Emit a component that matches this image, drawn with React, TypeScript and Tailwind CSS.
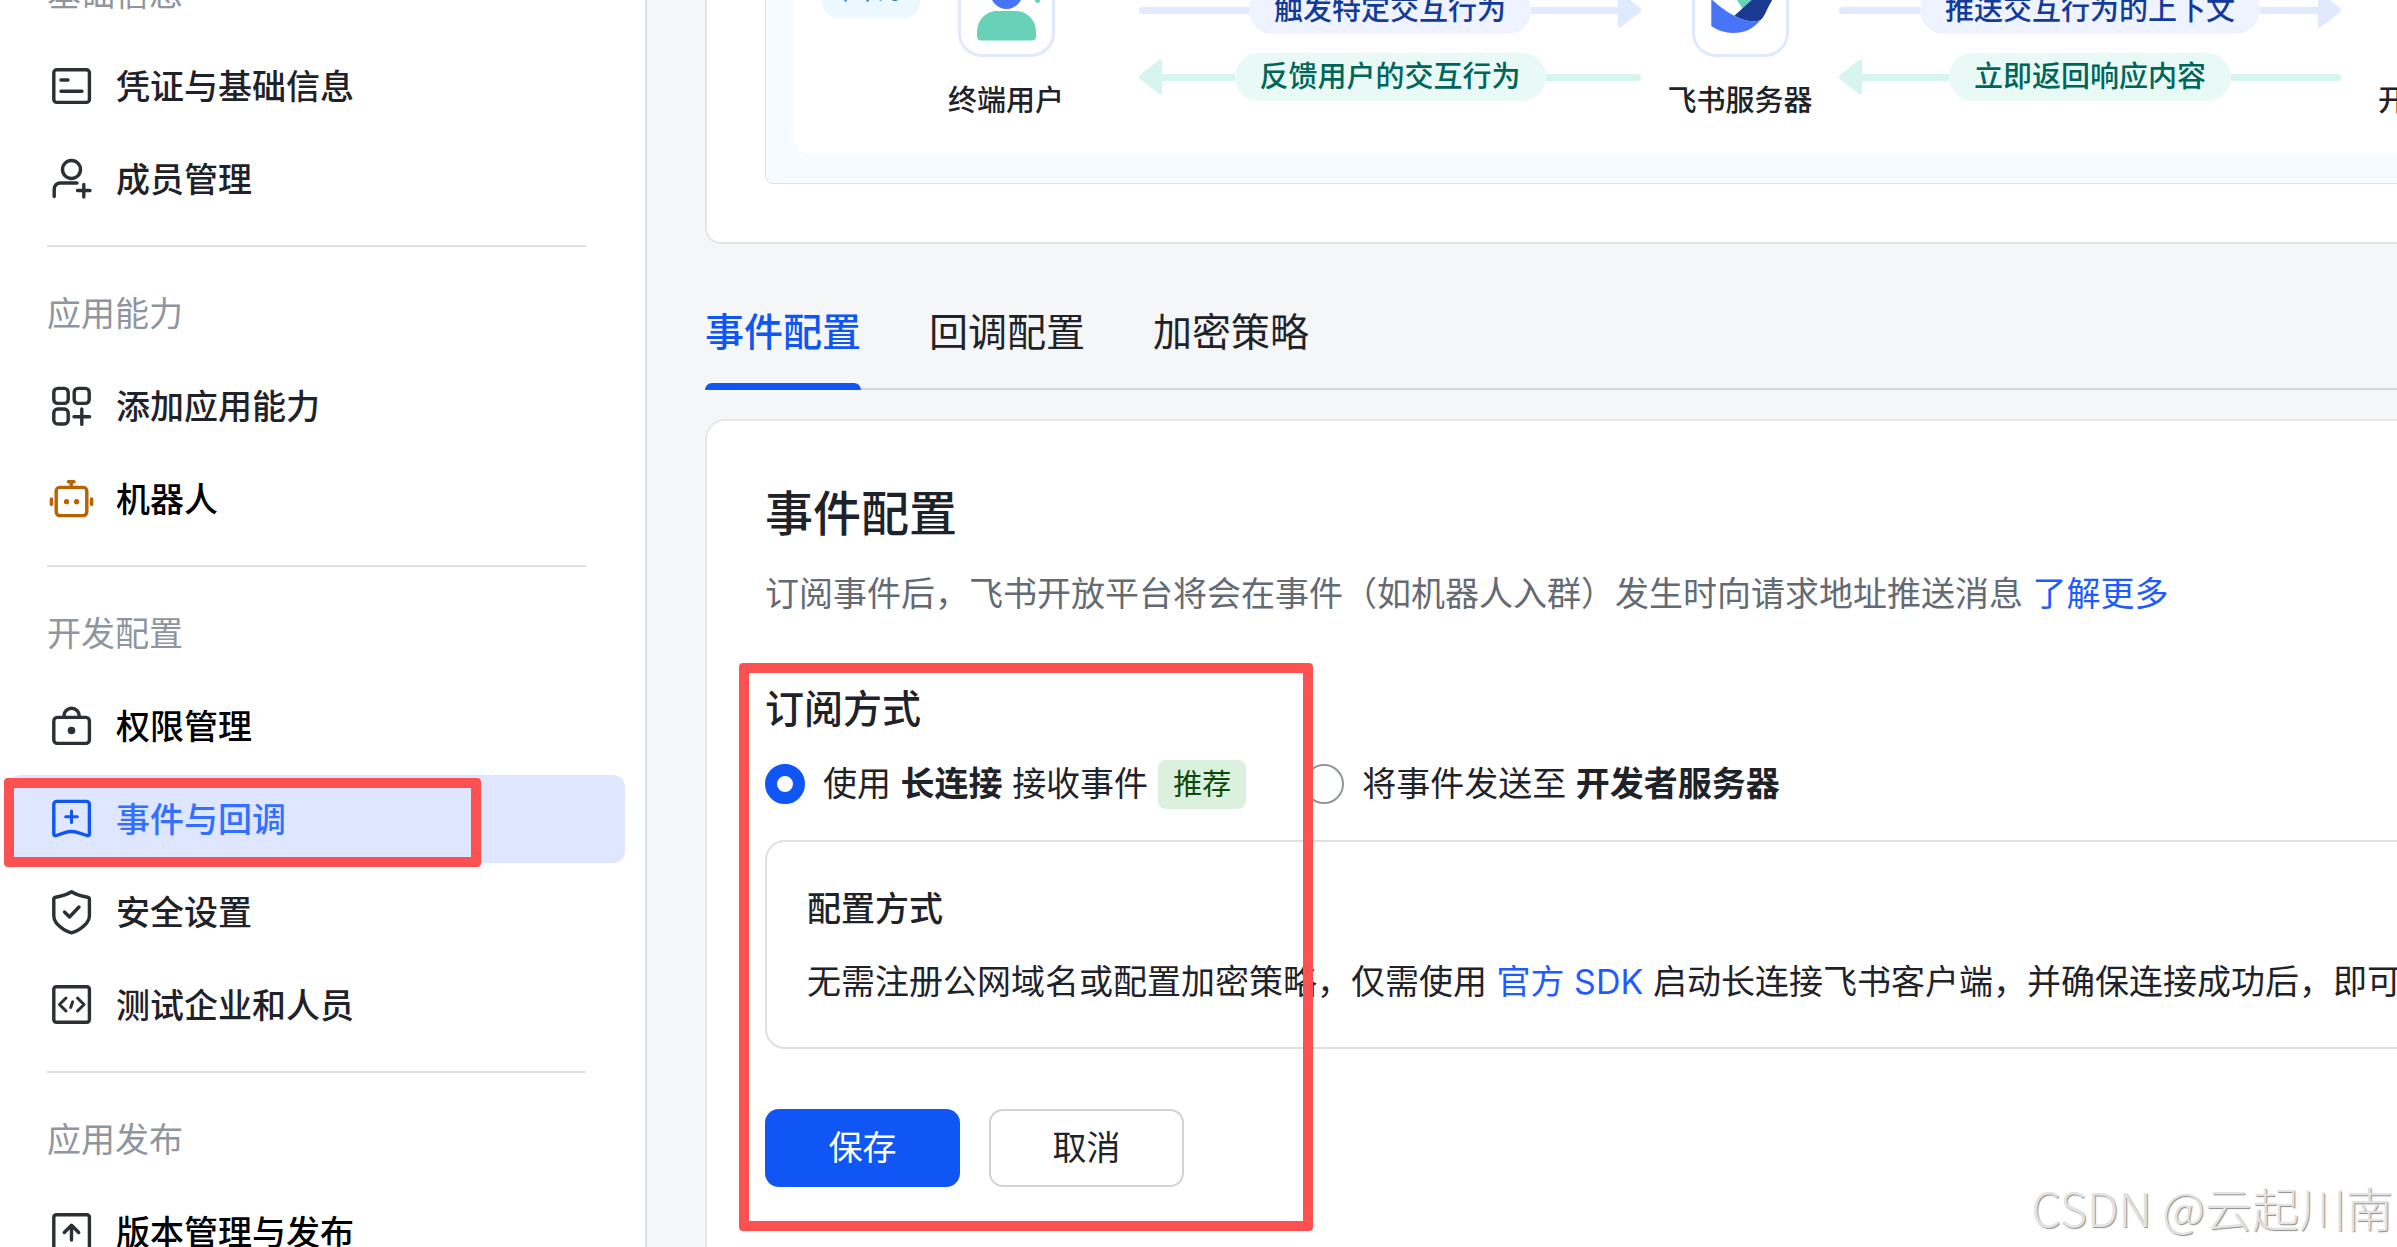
import { useState, type ReactNode } from "react";

type IconProps = { className?: string; children: ReactNode };

function Icon({ className = "text-[#2b2f36]", children }: IconProps) {
  return (
    <svg
      aria-hidden="true"
      viewBox="0 0 40 40"
      fill="none"
      stroke="currentColor"
      strokeWidth="3.4"
      strokeLinecap="round"
      strokeLinejoin="round"
      className={"size-10 shrink-0 overflow-visible " + className}
    >
      {children}
    </svg>
  );
}

const icons = {
  credential: (
    <Icon>
      <rect x="1.8" y="3.8" width="35.6" height="32.6" rx="3" />
      <path d="M9 14h7M9 25.2h21" />
    </Icon>
  ),
  member: (
    <Icon>
      <circle cx="19.5" cy="10.5" r="9" />
      <path d="M2.2 37.5V30a6 6 0 0 1 6-6H25M31.8 25.5v12.5M25.5 31.5h12.5" />
    </Icon>
  ),
  ability: (
    <Icon>
      <rect x="1.8" y="2.4" width="14.4" height="15" rx="4" />
      <rect x="22.2" y="2.4" width="15" height="15" rx="4" />
      <rect x="1.8" y="23" width="14.4" height="15" rx="4" />
      <path d="M29.8 23v15.4M22 30.7h15.6" />
    </Icon>
  ),
  robot: (
    <Icon className="text-[#b86200]">
      <rect x="4.2" y="8.4" width="30.6" height="28.2" rx="3.5" />
      <path d="M19.2 3v4M16.4 2.8h5.6M-.6 20v5.4M39.6 20v5.4" />
      <circle cx="14.5" cy="22.7" r="2.6" fill="currentColor" stroke="none" />
      <circle cx="24.6" cy="22.7" r="2.6" fill="currentColor" stroke="none" />
    </Icon>
  ),
  lock: (
    <Icon>
      <rect x="1.8" y="11.4" width="35.6" height="26" rx="3.5" />
      <path d="M12 11V9.5a7.6 7.2 0 0 1 15.2 0V11" />
      <circle cx="19.5" cy="24.5" r="3.8" fill="currentColor" stroke="none" />
    </Icon>
  ),
  event: (
    <Icon className="text-[#0f56f5]">
      <path d="M1.8 35.2V5.4a3 3 0 0 1 3-3h29.6a3 3 0 0 1 3 3v29.8c0 1.4-1.2 1.8-2.4 1.3L26 33.6c-4.600-1.600-8.400-1.600-13 0l-8.800 2.900c-1.200.5-2.400.1-2.400-1.300Z" />
      <path d="M19.5 12v11.600M13.700 17.800h11.600" strokeWidth="3" />
    </Icon>
  ),
  shield: (
    <Icon>
      <path d="M19.500-.2C14 3.200 8.500 4.500 3.600 5.200 2.500 5.400 1.800 6 1.800 7.200V24c0 3 .8 5 2.600 7.200C9 36.400 14 39.500 19.500 40.800c5.500-1.300 10.500-4.400 15.100-9.600 1.800-2.200 2.800-4.200 2.800-7.200V7.200c0-1.200-.7-1.800-1.800-2C30.500 4.500 25 3.200 19.500-.2Z" />
      <path d="m12.500 20 5 5 9.500-10" />
    </Icon>
  ),
  code: (
    <Icon>
      <rect x="1.800" y="1.800" width="35.600" height="35.400" rx="2.500" />
      <path d="m14 13-6.500 6.500L14 26M25.500 13l6.500 6.500-6.500 6.500M20.700 16.800l-2 5.600" strokeWidth="3" />
    </Icon>
  ),
  release: (
    <Icon>
      <rect x="1.800" y="2.800" width="35.600" height="35.400" rx="2.500" />
      <path d="M19.500 28V13.500M12.300 20.500l7.200-7.200 7.200 7.200" />
    </Icon>
  ),
};

type Item = { label: string; icon: ReactNode; tone?: string; current?: boolean };

const groups: { title: string; items: Item[] }[] = [
  {
    title: "基础信息",
    items: [
      { label: "凭证与基础信息", icon: icons.credential },
      { label: "成员管理", icon: icons.member },
    ],
  },
  {
    title: "应用能力",
    items: [
      { label: "添加应用能力", icon: icons.ability },
      { label: "机器人", icon: icons.robot, tone: "text-black" },
    ],
  },
  {
    title: "开发配置",
    items: [
      { label: "权限管理", icon: icons.lock, tone: "text-black" },
      { label: "事件与回调", icon: icons.event, tone: "text-[#3370ff]", current: true },
      { label: "安全设置", icon: icons.shield },
      { label: "测试企业和人员", icon: icons.code },
    ],
  },
  {
    title: "应用发布",
    items: [{ label: "版本管理与发布", icon: icons.release, tone: "text-black" }],
  },
];

function NavItem({ item }: { item: Item }) {
  return (
    <li className="relative">
      <a
        href="#"
        aria-current={item.current ? "page" : undefined}
        className={
          "flex h-[88px] items-center gap-6 rounded-xl pl-11 font-medium " +
          (item.tone ?? "text-[#1f2329]") +
          (item.current ? " bg-[#dfe6ff]" : "")
        }
      >
        {item.icon}
        {item.label}
      </a>
      {item.current && (
        <span className="pointer-events-none absolute -left-1 top-[3px] h-[89px] w-[477px] rounded border-10 border-[#fd5050]" />
      )}
    </li>
  );
}

function Sidebar() {
  return (
    <aside className="w-[647px] shrink-0 overflow-hidden border-r-2 border-[#dee0e3] bg-white pl-2 pr-5 text-[34px]">
      <nav className="-mt-[51px]" aria-label="应用导航">
        {groups.map((group, i) => (
          <section key={group.title}>
            {i > 0 && <hr className="my-[22px] mx-[39px] border-t-2 border-[#dee0e3]" />}
            <h2 className="mb-[5px] flex h-[88px] items-center pl-[39px] text-[#8f959e]">{group.title}</h2>
            <ul className="flex flex-col gap-[5px]">
              {group.items.map((item) => (
                <NavItem key={item.label} item={item} />
              ))}
            </ul>
          </section>
        ))}
      </nav>
    </aside>
  );
}

function Node({ label, className, children }: { label: string; className: string; children: ReactNode }) {
  return (
    <div className={"flex shrink-0 flex-col items-center " + className}>
      <div className="size-[97px] rounded-3xl border-3 border-[#e1e9ff] bg-white">
        <svg aria-hidden="true" viewBox="3 3 91 91" className="size-full">
          {children}
        </svg>
      </div>
      <div className="mt-[22px] whitespace-nowrap leading-[44px] font-medium">{label}</div>
    </div>
  );
}

function RightArrow({ label }: { label: string }) {
  return (
    <div className="flex items-center">
      <span className="h-[7px] flex-1 rounded-l bg-[#e1e9ff]" />
      <span className="flex h-12 items-center rounded-3xl bg-[#eff3ff] px-[25px] font-medium text-[#133c9a]">{label}</span>
      <span className="flex flex-1 items-center">
        <span className="h-[7px] flex-1 bg-[#e1e9ff]" />
        <svg aria-hidden="true" viewBox="0 0 23 36" className="h-9 w-[23px] fill-[#e1e9ff]">
          <path d="M0 2Q0-1 3 1L21 15Q25 18 21 21L3 35Q0 37 0 34Z" />
        </svg>
      </span>
    </div>
  );
}

function LeftArrow({ label }: { label: string }) {
  return (
    <div className="flex items-center">
      <span className="flex flex-1 items-center">
        <svg aria-hidden="true" viewBox="0 0 23 36" className="h-9 w-[23px] fill-[#d6f5ee]">
          <path d="M23 2Q23-1 20 1L2 15Q-2 18 2 21L20 35Q23 37 23 34Z" />
        </svg>
        <span className="h-[7px] flex-1 bg-[#d6f5ee]" />
      </span>
      <span className="flex h-12 items-center rounded-3xl bg-[#e9faf6] px-[25px] font-medium text-[#00665a]">{label}</span>
      <span className="h-[7px] flex-1 rounded-r bg-[#d6f5ee]" />
    </div>
  );
}

function Exchange({ send, reply }: { send: string; reply: string }) {
  return (
    <div className="mt-[26px] flex w-[502px] shrink-0 flex-col gap-[19px] whitespace-nowrap">
      <RightArrow label={send} />
      <LeftArrow label={reply} />
    </div>
  );
}

function CallbackDiagram() {
  return (
    <section className="rounded-2xl border-2 border-[#e4e5e7] bg-white px-[58px] pb-[58px] pt-[30px]">
      <div className="overflow-hidden rounded-lg border border-[#dee0e3] bg-[#f5fbff] py-7 pl-[27px]">
        <div className="relative flex items-start gap-[26px] rounded-[20px] bg-white pb-8 pl-[106px] pt-[59px] text-[29px]">
          <span className="absolute left-[29px] top-[59px] rounded-2xl bg-[#ebf8ff] px-5 leading-[58px] text-[#2b86ab]">
            回调
          </span>
          <Node label="终端用户" className="w-[214px]">
            <circle cx="48.500" cy="33" r="16" fill="#4775f5" />
            <path d="M19 72c0-12 9-21 20-21h18c12 0 21 9 21 21v4.500q0 4-4 4H23q-4 0-4-4Z" fill="#68d2b8" />
            <ellipse cx="79.500" cy="40" rx="2.600" ry="3" fill="#68d2b8" />
          </Node>
          <Exchange send="触发特定交互行为" reply="反馈用户的交互行为" />
          <Node label="飞书服务器" className="w-[146px]">
            <path d="M30 24h26q8 12 5 18l-10 8Q44 36 30 24Z" fill="#68d2b8" />
            <path d="M42.300 55.700 58.700 41Q68 33 82 37 77 45 73 54q-2 4-5 6.500-12 3-25.700-4.800Z" fill="#1c3a92" />
            <path d="M19.300 39Q31 50 42.300 55.700 55 63 68 60.500 58 73 41 73q-12 0-21.700-7Z" fill="#4775f5" />
          </Node>
          <Exchange send="推送交互行为的上下文" reply="立即返回响应内容" />
          <Node label="开发者服务器" className="w-[196px]">
            <rect x="22" y="26" width="54" height="44" rx="6" fill="#4775f5" />
          </Node>
        </div>
      </div>
    </section>
  );
}

const tabs = ["事件配置", "回调配置", "加密策略"];

function Tabs() {
  const [active, setActive] = useState(0);
  return (
    <div role="tablist" className="mt-[58px] flex gap-[68px] border-b-2 border-[#d3d6db] text-[39px]">
      {tabs.map((tab, i) => (
        <button
          key={tab}
          type="button"
          role="tab"
          aria-selected={i === active}
          onClick={() => setActive(i)}
          className={
            "-mb-0.5 flex flex-col gap-[21px] leading-[60px] " +
            (i === active ? "font-medium text-[#0f56f5]" : "text-[#1f2329]")
          }
        >
          {tab}
          <span className={"h-[7px] w-full rounded-t-lg " + (i === active ? "bg-[#0f56f5]" : "")} />
        </button>
      ))}
    </div>
  );
}

const radioStyle =
  "size-10 shrink-0 appearance-none rounded-full border-2 border-[#8f959e] bg-white checked:border-[12px] checked:border-[#0f56f5]";

function Subscription() {
  const [mode, setMode] = useState("socket");
  return (
    <form className="relative mt-[65px]" onSubmit={(e) => e.preventDefault()}>
      <h3 className="text-[39px] font-medium">订阅方式</h3>
      <div className="mt-[25px] flex h-[50px] items-center gap-[58px]">
        <div className="flex items-center">
          <label className="flex items-center gap-[18px]">
            <input
              type="radio"
              name="mode"
              className={radioStyle}
              checked={mode === "socket"}
              onChange={() => setMode("socket")}
            />
            <span>
              使用 <b>长连接</b> 接收事件
            </span>
          </label>
          <span className="ml-2.5 rounded-lg bg-[#dcf1dd] px-[15px] text-[29px] leading-[49px] text-[#0b4a0f]">推荐</span>
        </div>
        <label className="flex items-center gap-[18px]">
          <input
            type="radio"
            name="mode"
            className={radioStyle}
            checked={mode === "server"}
            onChange={() => setMode("server")}
          />
          <span>
            将事件发送至 <b>开发者服务器</b>
          </span>
        </label>
      </div>
      <div className="mt-[31px] rounded-[20px] border-2 border-[#dfe0e4] px-10 pb-10 pt-[42px]">
        <h4 className="font-medium">配置方式</h4>
        <p className="mt-[23px] whitespace-nowrap">
          无需注册公网域名或配置加密策略，仅需使用{" "}
          <a href="#" className="text-[#1f5cff]">
            官方 SDK
          </a>{" "}
          启动长连接飞书客户端，并确保连接成功后，即可
        </p>
      </div>
      <div className="mt-[60px] flex gap-[29px]">
        <button type="submit" className="h-[78px] w-[195px] rounded-[14px] bg-[#0f56f5] text-white">
          保存
        </button>
        <button type="button" className="h-[78px] w-[195px] rounded-[14px] border-2 border-[#d0d3d6] bg-white">
          取消
        </button>
      </div>
      <span className="pointer-events-none absolute -bottom-11 -left-[26px] -top-[21px] w-[574px] rounded border-10 border-[#fd5050]" />
    </form>
  );
}

export default function App() {
  return (
    <div className="relative flex h-screen overflow-hidden bg-[#f5f6f7] font-['Inter','Noto_Sans_CJK_SC',sans-serif] text-[#1f2329]">
      <Sidebar />
      <main className="min-w-0 flex-1 overflow-hidden pl-[58px]">
        <div className="-mr-[160px] -mt-[160px]">
          <CallbackDiagram />
          <Tabs />
          <section className="mt-[29px] rounded-[20px] border-2 border-[#e6e7e8] bg-white pb-24 pl-[58px] pr-[58px] pt-[63px] text-[34px] leading-[50px]">
            <h1 className="text-5xl leading-[60px] font-medium">事件配置</h1>
            <p className="mt-[25px] whitespace-nowrap text-[#646a73]">
              订阅事件后，飞书开放平台将会在事件（如机器人入群）发生时向请求地址推送消息{" "}
              <a href="#" className="text-[#1f5cff]">
                了解更多
              </a>
            </p>
            <Subscription />
          </section>
        </div>
      </main>
      <div className="pointer-events-none absolute bottom-[6px] right-1 font-['Noto_Sans_CJK_SC',sans-serif] text-[47px] leading-[68px] font-light text-[#e2e2e2] [text-shadow:1px_1px_1px_#8c8c8c]">
        CSDN @云起川南
      </div>
    </div>
  );
}
